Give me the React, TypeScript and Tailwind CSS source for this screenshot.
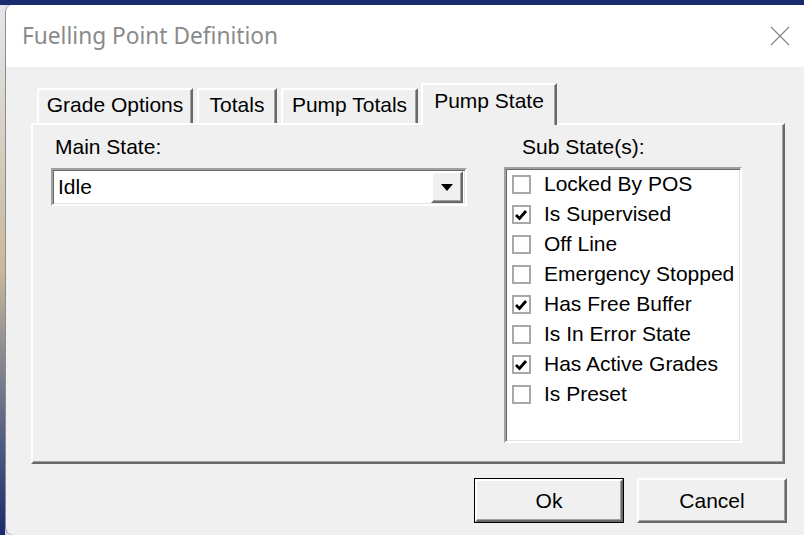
import { useState } from 'react'

type SubState = { label: string; checked: boolean }

const initialSubStates: SubState[] = [
  { label: 'Locked By POS', checked: false },
  { label: 'Is Supervised', checked: true },
  { label: 'Off Line', checked: false },
  { label: 'Emergency Stopped', checked: false },
  { label: 'Has Free Buffer', checked: true },
  { label: 'Is In Error State', checked: false },
  { label: 'Has Active Grades', checked: true },
  { label: 'Is Preset', checked: false },
]

const tabs = [
  { label: 'Grade Options', width: 'w-[156px] mr-[4px]' },
  { label: 'Totals', width: 'w-[80px] mr-[4px]' },
  { label: 'Pump Totals', width: 'w-[137px] mr-[3px]' },
  { label: 'Pump State', width: 'w-[136px]' },
]

// classic win32 raised / sunken edges
const raised =
  'border-t-white border-l-white border-r-[#696969] border-b-[#696969] shadow-[inset_-1px_-1px_0_#a0a0a0]'
const sunken =
  'border-t-[#a0a0a0] border-l-[#a0a0a0] border-r-white border-b-white shadow-[inset_1px_1px_0_#696969,inset_-1px_-1px_0_#e3e3e3]'

function CheckBox({ checked }: { checked: boolean }) {
  return (
    <span className="flex h-[19px] w-[19px] shrink-0 items-end justify-start border-2 border-[#a8a8a8] bg-white">
      {checked && (
        <svg width="13" height="11" viewBox="0 0 13 11" className="mb-[1px] ml-[1px]">
          <path d="M1 5 L4.5 8.5 L11 1" stroke="#000" strokeWidth="2.8" fill="none" />
        </svg>
      )}
    </span>
  )
}

function TabStrip({ active, onSelect }: { active: number; onSelect: (i: number) => void }) {
  return (
    <div className="flex h-[40px] items-end pl-[6px]">
      {tabs.map((t, i) => {
        const isActive = i === active
        return (
          <button
            key={t.label}
            onClick={() => onSelect(i)}
            className={`${t.width} flex justify-center rounded-tl-[2px] border-t-[2px] border-r-[2px] border-l-[2px] border-t-white border-l-white border-r-[#696969] bg-[#f0f0f0] text-black shadow-[inset_-1px_0_0_#a0a0a0] ${
              isActive ? 'relative z-10 -mb-[2px] h-[42px] items-start pt-[4px]' : 'h-[35px] items-start pt-[3px]'
            }`}
          >
            {t.label}
          </button>
        )
      })}
    </div>
  )
}

export default function App() {
  const [activeTab, setActiveTab] = useState(3)
  const [subStates, setSubStates] = useState(initialSubStates)

  const toggle = (idx: number) =>
    setSubStates((s) => s.map((x, i) => (i === idx ? { ...x, checked: !x.checked } : x)))

  return (
    <div
      className="flex h-[535px] w-[804px] flex-col overflow-hidden bg-[#d3d9e2] text-[21px] leading-[24px]"
      style={{ fontFamily: '"Liberation Sans", Arial, sans-serif' }}
    >
      <div className="h-[5px] shrink-0 bg-[#1a2a6e]" />
      <div className="flex flex-1">
        <div className="w-[5px] shrink-0 bg-gradient-to-b from-[#e4e7ec] via-[#c9b89a] to-[#1a2a6e]" />
        {/* dialog window */}
        <div className="flex flex-1 flex-col overflow-hidden rounded-tl-[8px] rounded-bl-[8px] border-l border-[#8c8c8c] bg-[#f0f0f0]">
          <div className="flex h-[62px] shrink-0 items-center justify-between bg-white pl-[16px] pr-[14px]">
            <span
              className="text-[22.7px] text-[#8a8a8a]"
              style={{ fontFamily: '"Noto Sans", "Open Sans", sans-serif' }}
            >
              Fuelling Point Definition
            </span>
            <svg width="20" height="20" viewBox="0 0 20 20">
              <path d="M1 1 L19 19 M19 1 L1 19" stroke="#8a8a8a" strokeWidth="1.3" />
            </svg>
          </div>

          <div className="flex flex-1 flex-col pl-[25px] pt-[16px]">
            <TabStrip active={activeTab} onSelect={setActiveTab} />

            <div
              className={`flex h-[341px] w-[754px] border-2 ${raised} pl-[18px] pr-[41px] pt-[10px]`}
            >
              <div className="flex flex-1 flex-col">
                <span className="pl-[4px]">Main State:</span>
                <div className={`mt-[9px] flex h-[38px] w-[416px] border-2 ${sunken} bg-white`}>
                  <div className="flex flex-1 items-center pl-[5px]">Idle</div>
                  <div className={`m-[1px] mr-[2px] flex w-[32px] items-center justify-center border-2 bg-[#f0f0f0] ${raised}`}>
                    <svg width="12" height="7" viewBox="0 0 12 7">
                      <path d="M0 0 L12 0 L6 7 Z" fill="#000" />
                    </svg>
                  </div>
                </div>
              </div>

              <div className="flex w-[238px] flex-col">
                <span className="pl-[18px]">Sub State(s):</span>
                <div className={`mt-[8px] flex h-[276px] flex-col border-2 ${sunken} bg-white pl-[6px]`}>
                  {subStates.map((s, i) => (
                    <label
                      key={s.label}
                      onClick={() => toggle(i)}
                      className="flex h-[30px] cursor-default items-center gap-[13px] whitespace-nowrap"
                    >
                      <CheckBox checked={s.checked} />
                      <span>{s.label}</span>
                    </label>
                  ))}
                </div>
              </div>
            </div>

            <div className="flex w-[756px] justify-end gap-[13px] pt-[14px]">
              <button className="h-[45px] w-[150px] border border-black bg-[#f0f0f0]">
                <span className={`flex h-full w-full items-center justify-center border-2 ${raised}`}>Ok</span>
              </button>
              <button className={`h-[45px] w-[150px] border-2 bg-[#f0f0f0] ${raised}`}>Cancel</button>
            </div>
          </div>
        </div>
      </div>
    </div>
  )
}
